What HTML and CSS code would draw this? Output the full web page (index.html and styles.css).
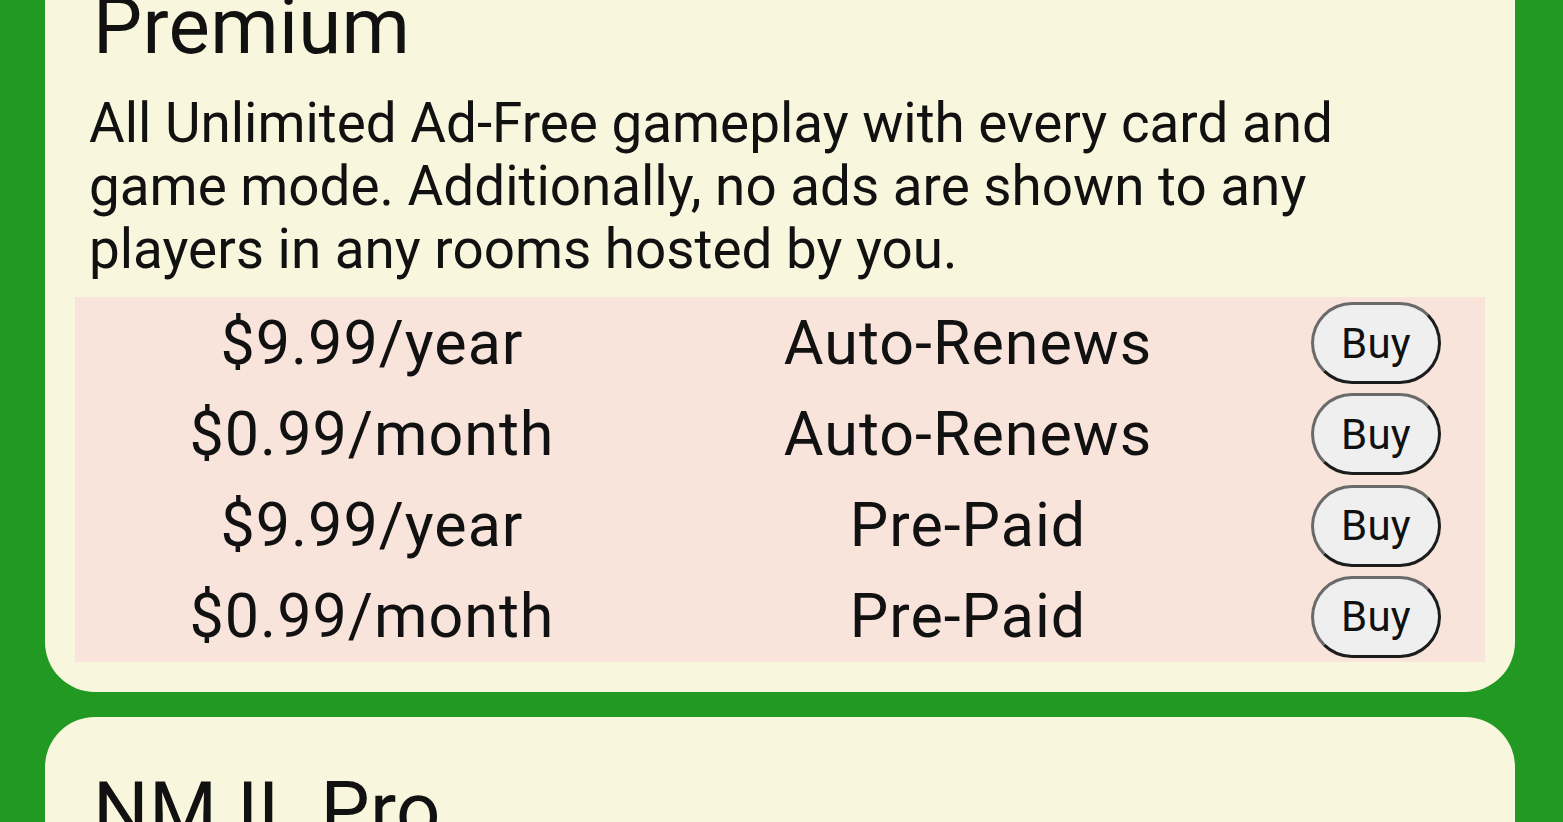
FILE: index.html
```html
<!DOCTYPE html>
<html lang="en">
<head>
<meta charset="utf-8">
<title>Subscriptions</title>
<link rel="stylesheet" href="styles.css">
</head>
<body>
<main class="list">
  <section class="card">
    <h2 class="card-title">Premium</h2>
    <p class="card-desc">All Unlimited Ad-Free gameplay with every card and game mode. Additionally, no ads are shown to any players in any rooms hosted by you.</p>
    <div class="plans">
      <div class="cell price">$9.99/year</div>
      <div class="cell kind">Auto-Renews</div>
      <div class="cell action"><button class="buy">Buy</button></div>
      <div class="cell price">$0.99/month</div>
      <div class="cell kind">Auto-Renews</div>
      <div class="cell action"><button class="buy">Buy</button></div>
      <div class="cell price">$9.99/year</div>
      <div class="cell kind">Pre-Paid</div>
      <div class="cell action"><button class="buy">Buy</button></div>
      <div class="cell price">$0.99/month</div>
      <div class="cell kind">Pre-Paid</div>
      <div class="cell action"><button class="buy">Buy</button></div>
    </div>
  </section>
  <section class="card">
    <h2 class="card-title">NM IL Pro</h2>
    <p class="card-desc">&nbsp;</p>
  </section>
</main>
</body>
</html>
```
FILE: styles.css
```css
html, body {
  margin: 0;
  padding: 0;
  background: #229922;
  overflow: hidden;
  height: 100%;
}
body {
  font-family: Roboto, "Liberation Sans", sans-serif;
  color: #111;
}
.list {
  margin-top: -67px;
  display: flex;
  flex-direction: column;
  gap: 25px;
  padding-left: 45px;
}
.card {
  width: 1470px;
  box-sizing: border-box;
  background: #f8f6dc;
  border-radius: 50px;
  padding: 30px;
}
.card-title {
  margin: 18px 0 0 18px;
  font-size: 78px;
  font-weight: 400;
  line-height: normal;
  letter-spacing: 0.3px;
}
.card-desc {
  margin: 20px 15px 16px 14px;
  font-size: 54.8px;
  line-height: 63px;
}
.plans {
  display: grid;
  grid-template-columns: 594fr 598fr 218fr;
  grid-auto-rows: 91.25px;
  background: #f8e4da;
}
.cell {
  display: flex;
  align-items: center;
  justify-content: center;
  font-size: 61px;
  line-height: normal;
  letter-spacing: 1px;
}
.buy {
  font-family: Roboto, "Liberation Sans", sans-serif;
  font-size: 42px;
  line-height: normal;
  letter-spacing: 0.3px;
  color: #111;
  background: #efefef;
  border: 3.5px solid;
  border-color: #6a6a6a #1c1c1c #1c1c1c #6a6a6a;
  border-radius: 41px;
  padding: 13.5px 26.5px;
  margin-top: 1px;
}
```
